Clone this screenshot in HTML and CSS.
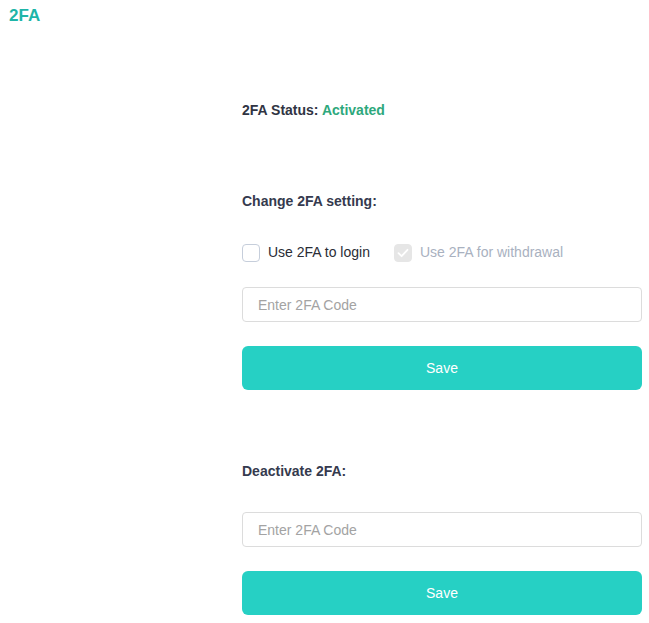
FILE: index.html
```html
<!DOCTYPE html>
<html>
<head>
<meta charset="utf-8">
<link rel="stylesheet" href="styles.css">
</head>
<body>
<header class="page-title">2FA</header>
<main class="panel">
  <div class="status">2FA Status: <span class="status-on">Activated</span></div>

  <section class="section section-change">
    <div class="section-label">Change 2FA setting:</div>
    <div class="checks">
      <label class="check">
        <span class="box"></span>
        <span class="check-text">Use 2FA to login</span>
      </label>
      <label class="check check-disabled">
        <span class="box box-checked">
          <svg width="12" height="10" viewBox="0 0 12 10"><path d="M1.5 5.2 L4.6 8.2 L10.5 1.8" fill="none" stroke="#fff" stroke-width="1.8" stroke-linecap="round" stroke-linejoin="round"/></svg>
        </span>
        <span class="check-text">Use 2FA for withdrawal</span>
      </label>
    </div>
    <input class="code-input" type="text" placeholder="Enter 2FA Code">
    <button class="save-btn">Save</button>
  </section>

  <section class="section section-deactivate">
    <div class="section-label">Deactivate 2FA:</div>
    <input class="code-input code-input-deact" type="text" placeholder="Enter 2FA Code">
    <button class="save-btn">Save</button>
  </section>
</main>
</body>
</html>
```

FILE: styles.css
```css
* { box-sizing: border-box; }
html, body { margin: 0; padding: 0; background: #fff; }
body {
  font-family: "Liberation Sans", Arial, sans-serif;
  color: #303443;
  width: 649px;
  height: 623px;
  overflow: hidden;
}
.page-title {
  padding: 6px 0 0 9px;
  height: 26px;
  font-size: 17px;
  line-height: 20px;
  font-weight: bold;
  color: #1eb5a8;
}
.panel {
  margin-left: 242px;
  width: 400px;
  padding-top: 74px;
}
.status {
  font-size: 14px;
  line-height: 20px;
  font-weight: bold;
  color: #303443;
}
.status-on { color: #2ea87c; }
.section-label {
  font-size: 14px;
  line-height: 20px;
  font-weight: bold;
  color: #353a4e;
}
.section-change { margin-top: 71px; }
.checks {
  display: flex;
  align-items: center;
  gap: 24px;
  margin-top: 32px;
  height: 18px;
}
.check {
  display: flex;
  align-items: center;
  gap: 8px;
  font-size: 14px;
  color: #2a2d36;
}
.box {
  width: 18px;
  height: 18px;
  border: 1px solid #c6cedb;
  border-radius: 4px;
  background: #fff;
  display: flex;
  align-items: center;
  justify-content: center;
  margin-top: 1px;
}
.box-checked {
  background: #e6e6e6;
  border-color: #e6e6e6;
}
.check-disabled { color: #a9b1bf; }
.code-input {
  display: block;
  width: 400px;
  height: 35px;
  margin-top: 26px;
  padding: 0 15px;
  border: 1px solid #dcdcdc;
  border-radius: 4px;
  font-family: "Liberation Sans", Arial, sans-serif;
  font-size: 14px;
  color: #333;
  outline: none;
}
.code-input::placeholder { color: #a3a3a3; }
.code-input-deact { margin-top: 31px; }
.save-btn {
  display: block;
  width: 400px;
  height: 44px;
  margin-top: 24px;
  border: none;
  border-radius: 6px;
  background: #26d0c4;
  color: #fff;
  font-family: "Liberation Sans", Arial, sans-serif;
  font-size: 14px;
  cursor: pointer;
}
.section-deactivate { margin-top: 71px; }
```
